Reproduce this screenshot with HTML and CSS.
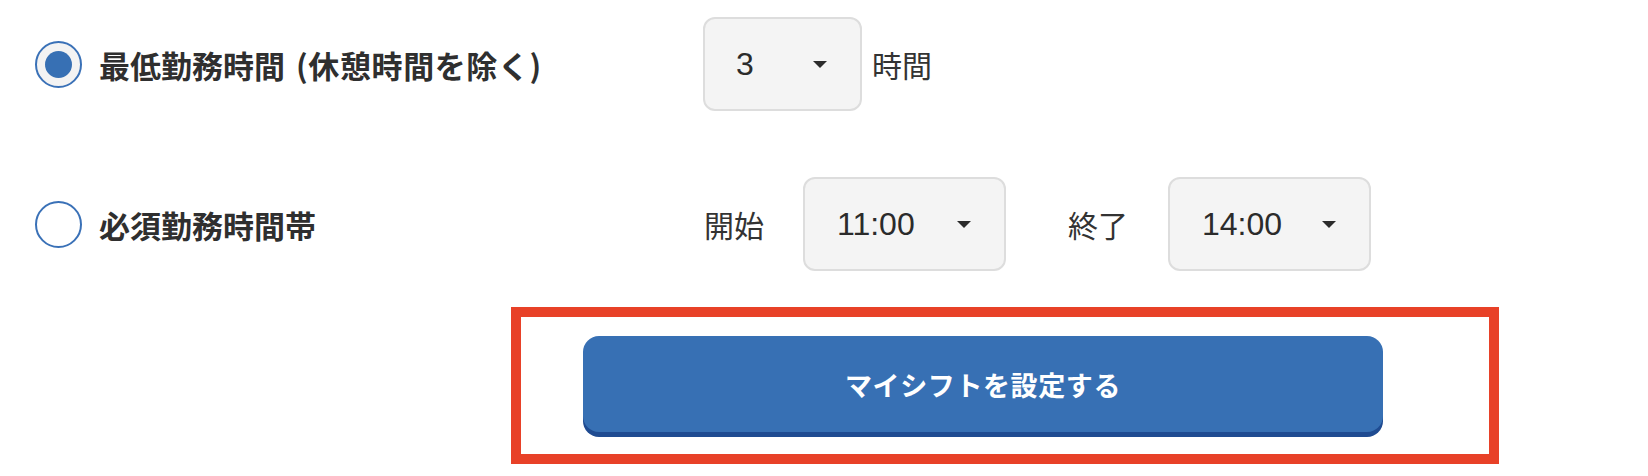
FILE: index.html
```html
<!DOCTYPE html>
<html lang="ja">
<head>
<meta charset="utf-8">
<title>マイシフト設定</title>
<link rel="stylesheet" href="styles.css">
</head>
<body>
<div class="page">
  <div class="row">
    <label class="choice">
      <span class="radio checked"><span class="dot"></span></span>
      <span class="choice-text">最低勤務時間 <span class="paren">(休憩時間を除く)</span></span>
    </label>
    <div class="controls">
      <div class="select select-hours"><span class="value">3</span><span class="caret"></span></div>
      <span class="unit unit-hours">時間</span>
    </div>
  </div>
  <div class="row row-second">
    <label class="choice">
      <span class="radio"></span>
      <span class="choice-text">必須勤務時間帯</span>
    </label>
    <div class="controls">
      <span class="unit unit-start">開始</span>
      <div class="select select-time"><span class="value">11:00</span><span class="caret"></span></div>
      <span class="unit unit-end">終了</span>
      <div class="select select-time"><span class="value">14:00</span><span class="caret"></span></div>
    </div>
  </div>
  <div class="highlight">
    <button class="submit" type="button">マイシフトを設定する</button>
  </div>
</div>
</body>
</html>
```

FILE: styles.css
```css
html, body {
  margin: 0;
  padding: 0;
  background: #ffffff;
}

body {
  font-family: "Noto Sans CJK JP", "Liberation Sans", sans-serif;
  color: #333333;
  width: 1648px;
  height: 476px;
  overflow: hidden;
}

.page {
  padding-top: 17px;
}

.row {
  display: flex;
  align-items: center;
  height: 94px;
}

.row-second {
  margin-top: 66px;
}

.choice {
  display: flex;
  align-items: center;
  width: 668px;
  padding-left: 35px;
  box-sizing: content-box;
  flex-shrink: 0;
}

.radio {
  width: 47px;
  height: 47px;
  box-sizing: border-box;
  border: 2px solid #3a71b7;
  border-radius: 50%;
  background: #ffffff;
  display: flex;
  align-items: center;
  justify-content: center;
  flex-shrink: 0;
}

.radio.checked {
  background: #f3f3f3;
}

.dot {
  width: 27px;
  height: 27px;
  border-radius: 50%;
  background: #3770b4;
}

.choice-text {
  margin-left: 17px;
  font-size: 31px;
  font-weight: 700;
  color: #2f2f2f;
  line-height: 1;
  white-space: nowrap;
}

.paren {
  margin-left: 4px;
  letter-spacing: 0.6px;
}

.controls {
  display: flex;
  align-items: center;
}

.select {
  height: 94px;
  box-sizing: border-box;
  border: 2px solid #dddddd;
  border-radius: 12px;
  background: #f4f4f4;
  display: flex;
  align-items: center;
  justify-content: space-between;
  padding: 0 33px 0 33px;
}

.select-hours {
  width: 159px;
  padding-left: 31px;
}

.select-time {
  width: 203px;
  padding-left: 32px;
}

.value {
  font-family: "Liberation Sans", Arial, sans-serif;
  font-size: 32px;
  color: #2b2b2b;
  line-height: 1;
}

.caret {
  width: 0;
  height: 0;
  border-left: 7.5px solid transparent;
  border-right: 7.5px solid transparent;
  border-top: 7px solid #2b2b2b;
}

.unit {
  font-size: 30px;
  font-weight: 400;
  color: #333333;
  line-height: 1;
  white-space: nowrap;
}

.unit-hours {
  margin-left: 10px;
}

.unit-start {
  margin-left: 1px;
  margin-right: 39px;
}

.unit-end {
  margin-left: 62px;
  margin-right: 40px;
}

.highlight {
  margin-top: 36px;
  margin-left: 511px;
  width: 988px;
  box-sizing: border-box;
  border: 10px solid #e84128;
  padding: 19px 106px 17px 62px;
}

.submit {
  display: block;
  width: 800px;
  height: 96px;
  margin-bottom: 5px;
  border: none;
  border-radius: 16px;
  background: #3770b4;
  box-shadow: 0 5px 0 #1f4b91;
  color: #ffffff;
  font-family: "Noto Sans CJK JP", "Liberation Sans", sans-serif;
  font-size: 27px;
  font-weight: 700;
  letter-spacing: 0.6px;
  cursor: pointer;
  padding: 0;
}
```
